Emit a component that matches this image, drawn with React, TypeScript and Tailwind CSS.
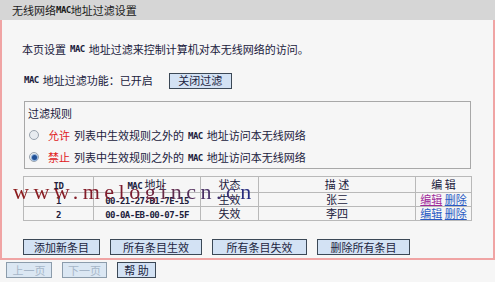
import React from "react";

function M({ children }: { children: React.ReactNode }) {
  return <span className="font-['DejaVu_Sans_Mono',monospace] text-[9px] font-bold tracking-[-0.5px]">{children}</span>;
}

function Btn({ children, w, disabled }: { children: React.ReactNode; w: string; disabled?: boolean }) {
  return (
    <div
      className={
        "h-[16px] flex items-center justify-center border leading-none " +
        w +
        (disabled
          ? " border-[#8c9cab] bg-[#dbe7f3] text-[#a6b6c8]"
          : " border-[#3b4856] bg-[#d3e2f4] text-[#1c2440]")
      }
    >
      {children}
    </div>
  );
}

function Radio({ checked }: { checked?: boolean }) {
  return (
    <div className="w-[10px] h-[10px] rounded-full border border-[#9aa4ae] bg-[#e8ecf0] flex items-center justify-center">
      {checked && <div className="w-[5px] h-[5px] rounded-full bg-[#1f4f96] ring-1 ring-[#8fb0d8]" />}
    </div>
  );
}

export default function App() {
  const th = "border border-[#b9b9b9] font-normal h-[16px] p-0 leading-none";
  const td = "border border-[#b9b9b9] h-[14px] p-0 leading-none text-center";
  return (
    <div className="relative w-[495px] h-[282px] overflow-hidden bg-[#f6f6f6] text-[11px] text-[#20203c] font-['Noto_Sans_CJK_SC','Noto_Sans',sans-serif]">
      <div className="h-[20px] bg-[#d6d6d6] flex items-center pl-[12px] text-[#1a1a1a] leading-none">
        无线网络<M>MAC</M>地址过滤设置
      </div>
      <div className="h-[240px] border-x-2 border-b-2 border-[#f0a4a4] flex flex-col">
        <div className="mt-[22px] ml-[20px] h-[14px] leading-[14px] flex items-center gap-[4px]">
          <span>本页设置</span>
          <M>MAC</M>
          <span>地址过滤来控制计算机对本无线网络的访问。</span>
        </div>
        <div className="mt-[17px] ml-[22px] h-[15px] flex items-center">
          <M>MAC</M>
          <span className="ml-[4px]">地址过滤功能：已开启</span>
          <div className="ml-[16px]">
            <Btn w="w-[63px]">关闭过滤</Btn>
          </div>
        </div>
        <div className="mt-[13px] ml-[22px] w-[447px] h-[68px] border border-[#a8a8a8] flex flex-col">
          <div className="mt-[4px] ml-[3px] h-[14px] leading-[14px]">过滤规则</div>
          <div className="mt-[8px] ml-[4px] h-[14px] flex items-center">
            <Radio />
            <span className="ml-[9px] text-[#e0201c]">允许</span>
            <span className="ml-[4px]">列表中生效规则之外的</span>
            <span className="ml-[4px]"><M>MAC</M></span>
            <span className="ml-[4px]">地址访问本无线网络</span>
          </div>
          <div className="mt-[8px] ml-[4px] h-[14px] flex items-center">
            <Radio checked />
            <span className="ml-[9px] text-[#e0201c]">禁止</span>
            <span className="ml-[4px]">列表中生效规则之外的</span>
            <span className="ml-[4px]"><M>MAC</M></span>
            <span className="ml-[4px]">地址访问本无线网络</span>
          </div>
        </div>
        <table className="mt-[7px] ml-[21px] w-[448px] border-collapse table-fixed">
          <colgroup>
            <col className="w-[70px]" />
            <col className="w-[107px]" />
            <col className="w-[58px]" />
            <col className="w-[157px]" />
            <col className="w-[56px]" />
          </colgroup>
          <thead>
            <tr>
              <th className={th}><M>ID</M></th>
              <th className={th}><M>MAC</M> 地址</th>
              <th className={th}>状态</th>
              <th className={th}>描 述</th>
              <th className={th}>编 辑</th>
            </tr>
          </thead>
          <tbody>
            <tr>
              <td className={td}><M>1</M></td>
              <td className={td}><M>00-21-27-B1-7E-15</M></td>
              <td className={td}>生效</td>
              <td className={td}>张三</td>
              <td className={td}>
                <span className="text-[#a02a9c] underline">编辑</span>{" "}
                <span className="text-[#2a5ac4] underline">删除</span>
              </td>
            </tr>
            <tr>
              <td className={td}><M>2</M></td>
              <td className={td}><M>00-0A-EB-00-07-5F</M></td>
              <td className={td}>失效</td>
              <td className={td}>李四</td>
              <td className={td}>
                <span className="text-[#2a5ac4] underline">编辑</span>{" "}
                <span className="text-[#2a5ac4] underline">删除</span>
              </td>
            </tr>
          </tbody>
        </table>
        <div className="mt-[18px] ml-[21px] flex gap-[10px]">
          <Btn w="w-[77px]">添加新条目</Btn>
          <Btn w="w-[92px]">所有条目生效</Btn>
          <Btn w="w-[95px]">所有条目失效</Btn>
          <Btn w="w-[93px]">删除所有条目</Btn>
        </div>
      </div>
      <div className="pt-[2px] pl-[6px] flex gap-[10px]">
        <Btn w="w-[46px]" disabled>上一页</Btn>
        <Btn w="w-[45px]" disabled>下一页</Btn>
        <Btn w="w-[39px]">帮 助</Btn>
      </div>
      <div className="absolute left-[13px] top-[181px] h-[22px] leading-[22px] text-[22px] tracking-[4.5px] font-['Liberation_Serif',serif] bg-gradient-to-r from-[#8c1c1c] via-[#7c1c30] to-[#1c2a86] bg-clip-text text-transparent whitespace-nowrap">
        www.melogincn.cn
      </div>
    </div>
  );
}
